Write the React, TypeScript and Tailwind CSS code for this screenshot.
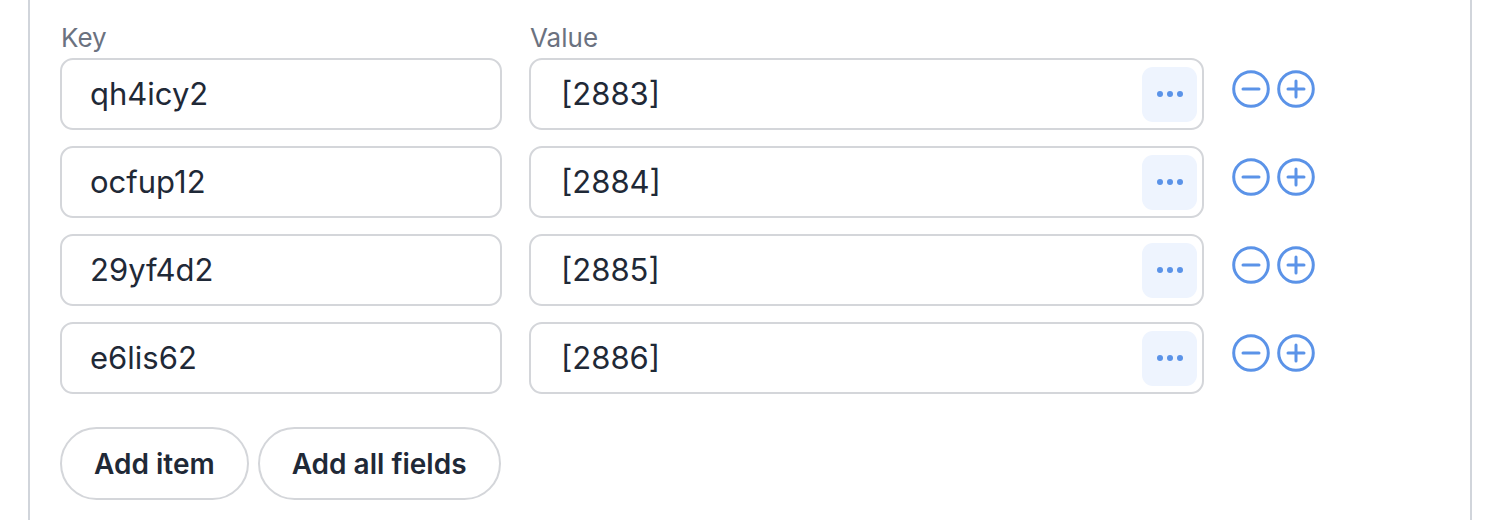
import React from "react";

const rows = [
  { k: "qh4icy2", v: "[2883]" },
  { k: "ocfup12", v: "[2884]" },
  { k: "29yf4d2", v: "[2885]" },
  { k: "e6lis62", v: "[2886]" },
];

function CircleIcon({ plus }: { plus?: boolean }) {
  return (
    <svg width="38" height="38" viewBox="0 0 38 38" fill="none" stroke="#5b93e8" strokeWidth="3" strokeLinecap="round">
      <circle cx="19" cy="19" r="17.3" />
      <line x1="11" y1="19" x2="27" y2="19" />
      {plus && <line x1="19" y1="11" x2="19" y2="27" />}
    </svg>
  );
}

export default function App() {
  return (
    <div className="w-[1502px] h-[520px] bg-white overflow-hidden font-['Inter',sans-serif]">
      <div className="ml-[28px] w-[1444px] h-[520px] border-x-2 border-[#d1d5db] pl-[30px] pt-[22px]">
        <div className="flex text-[26px] leading-[32px] text-[#6b7280]">
          <div className="w-[442px] mr-[28px] pl-[1px]">Key</div>
          <div>Value</div>
        </div>
        <div className="mt-[4px] flex flex-col gap-[16px]">
          {rows.map((r) => (
            <div key={r.k} className="flex items-center">
              <div className="w-[442px] h-[72px] rounded-[13px] border-2 border-[#d4d6da] flex items-center pl-[28px] text-[31px] text-[#1f2937]">
                {r.k}
              </div>
              <div className="ml-[27px] w-[675px] h-[72px] rounded-[13px] border-2 border-[#d4d6da] flex items-center pl-[30px] pr-[5px] text-[31px] text-[#1f2937]">
                <span className="flex-1">{r.v}</span>
                <div className="w-[55px] h-[55px] rounded-[11px] bg-[#eef4fe] flex items-center justify-center gap-[4px]">
                  <span className="w-[6px] h-[6px] rounded-full bg-[#5b93e8]" />
                  <span className="w-[6px] h-[6px] rounded-full bg-[#5b93e8]" />
                  <span className="w-[6px] h-[6px] rounded-full bg-[#5b93e8]" />
                </div>
              </div>
              <div className="ml-[28px] mb-[10px] flex items-center gap-[7px]">
                <CircleIcon />
                <CircleIcon plus />
              </div>
            </div>
          ))}
        </div>
        <div className="mt-[33px] flex gap-[9px]">
          <button className="h-[73px] px-[32px] rounded-full border-2 border-[#d4d6da] text-[28px] font-semibold text-[#1f2937]">
            Add item
          </button>
          <button className="h-[73px] px-[32px] rounded-full border-2 border-[#d4d6da] text-[28px] font-semibold text-[#1f2937]">
            Add all fields
          </button>
        </div>
      </div>
    </div>
  );
}
